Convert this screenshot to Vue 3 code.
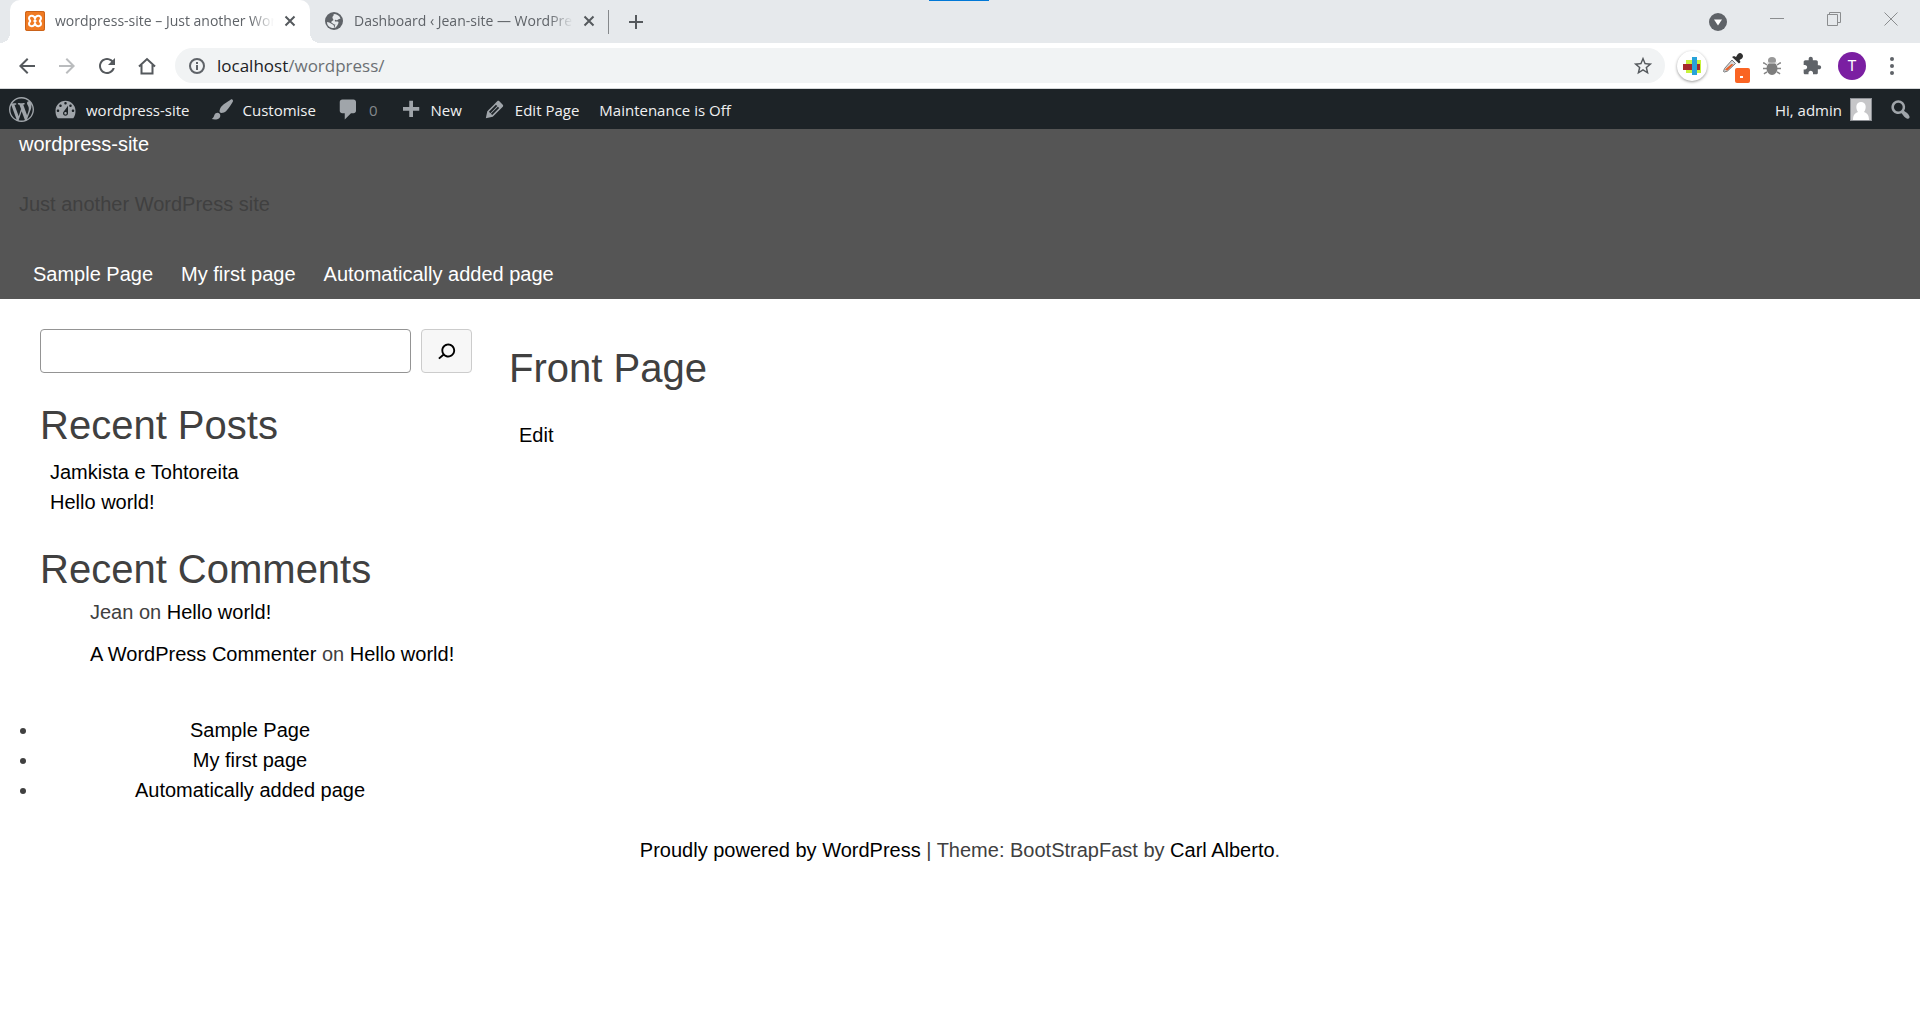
<script setup>
import { ref } from 'vue'

const address = ref('localhost/wordpress/')
const query = ref('')

const pages = ['Sample Page', 'My first page', 'Automatically added page']
const posts = ['Jamkista e Tohtoreita', 'Hello world!']

const adminItems = [
  {
    text: 'wordpress-site',
    icon: 'M3.76 17h12.48c1.34-1.63 1.76-3.74 1.76-6 0-4.42-3.58-8-8-8s-8 3.58-8 8c0 2.26.42 4.37 1.76 6zM10 4c.55 0 1 .45 1 1s-.45 1-1 1-1-.45-1-1 .45-1 1-1zM6 6c.55 0 1 .45 1 1s-.45 1-1 1-1-.45-1-1 .45-1 1-1zm8 0c.55 0 1 .45 1 1s-.45 1-1 1-1-.45-1-1 .45-1 1-1zm-5.37 5.55L12 7v6c0 1.1-.9 2-2 2s-2-.9-2-2c0-.57.24-1.08.63-1.45zM4 10c.55 0 1 .45 1 1s-.45 1-1 1-1-.45-1-1 .45-1 1-1zm12 0c.55 0 1 .45 1 1s-.45 1-1 1-1-.45-1-1 .45-1 1-1zm-5 3c0-.55-.45-1-1-1s-1 .45-1 1 .45 1 1 1 1-.45 1-1z',
  },
  {
    text: 'Customise',
    icon: 'M18.33 3.57s.27-.8-.31-1.36c-.53-.52-1.22-.24-1.22-.24-.61.3-5.76 3.47-7.67 5.57-.86.96-2.06 3.79-1.09 4.82.92.98 3.96-.17 4.79-1 2.06-2.06 5.21-7.17 5.5-7.79zM1.4 17.65c2.37-1.56 1.46-3.41 3.23-4.64.93-.65 2.22-.62 3.08.29.63.67.8 2.57-.16 3.46-1.57 1.45-4 1.55-6.15.89z',
  },
  {
    text: '0',
    dim: true,
    icon: 'M5 2h9c1.1 0 2 .9 2 2v7c0 1.1-.9 2-2 2h-2l-5 5v-5H5c-1.1 0-2-.9-2-2V4c0-1.1.9-2 2-2z',
  },
  { text: 'New', icon: 'M17 8v3h-5v5H9v-5H4V8h5V3h3v5h5z' },
  {
    text: 'Edit Page',
    icon: 'M13.89 3.39l2.71 2.72c.46.46.42 1.24.03 1.64l-8.01 8.02-5.56 1.16 1.16-5.58s7.6-7.63 7.99-8.03c.39-.39 1.22-.39 1.68.07zm-2.73 2.79l-5.59 5.61 1.11 1.11 5.54-5.65zm-2.97 8.23l5.58-5.6-1.07-1.08-5.59 5.6z',
  },
  { text: 'Maintenance is Off' },
]
</script>

<template>
  <div class="browser">
    <div class="tabstrip">
      <div class="tab active">
        <svg class="favicon" viewBox="0 0 20 20" aria-hidden="true">
          <rect width="20" height="20" rx="2" fill="#f07a22" />
          <rect x=".5" y=".5" width="19" height="19" rx="2" fill="none" stroke="#c9621a" />
          <path d="M10 7.500C9 4 4 4 4 7.200c0 1.500 1.200 2 1.200 2.800S4 11.300 4 12.800C4 16 9 16 10 12.500C11 16 16 16 16 12.800c0-1.500-1.200-2-1.200-2.800S16 8.700 16 7.200C16 4 11 4 10 7.500zM8.500 10h3" fill="none" stroke="#fff" stroke-width="2" />
        </svg>
        <span class="tab-title">wordpress-site – Just another WordPress site</span>
        <button class="plain" aria-label="Close tab">
          <svg width="12" height="12" viewBox="0 0 12 12"><path d="M1.500 1.500l9 9M10.500 1.500l-9 9" stroke="#55595d" stroke-width="2" /></svg>
        </button>
      </div>
      <div class="tab">
        <svg class="favicon" viewBox="0 0 20 20" aria-hidden="true">
          <circle cx="10" cy="10" r="9" fill="#5f6368" />
          <path d="M9.500 3C13 3 15.500 4.500 16.500 7.500L14 8.500c-.5.800-1 1-2 .5s-1.500.5-1 1.500h2.500c1.500 0 1 1.500.5 2.500s-1.500 3-3 4c-1-.5-1-2-1.500-3L7 12.500c-1-1-2.500-1-4-1.500 0 3.500 2.500 6 6.500 6l1.500-1c-.5-1-.2-1.500.5-2.500-1.500.5-2-1-3.500-1.500s-.5-2 1-2.500S8 7.500 8.500 6s2-1.500 1-3z" fill="#e6e9ec" />
        </svg>
        <span class="tab-title">Dashboard ‹ Jean-site — WordPress</span>
        <button class="plain" aria-label="Close tab">
          <svg width="12" height="12" viewBox="0 0 12 12"><path d="M1.500 1.500l9 9M10.500 1.500l-9 9" stroke="#55595d" stroke-width="2" /></svg>
        </button>
      </div>
      <span class="divider"></span>
      <button class="plain" aria-label="New tab">
        <svg width="16" height="16" viewBox="0 0 16 16"><path d="M8 1v14M1 8h14" stroke="#55595d" stroke-width="2" /></svg>
      </button>
      <div class="window-buttons">
        <button class="plain" aria-label="Search tabs">
          <svg width="18" height="18" viewBox="0 0 18 18" class="low"><circle cx="9" cy="9" r="9" fill="#5f6368" /><path d="M5 6.500h8L9 12.500z" fill="#fff" /></svg>
        </button>
        <button class="plain" aria-label="Minimise">
          <svg width="14" height="14" viewBox="0 0 14 14"><path d="M0 6.500h14" stroke="#8b8d8f" /></svg>
        </button>
        <button class="plain" aria-label="Restore">
          <svg width="14" height="14" viewBox="0 0 14 14"><path d="M.5 2.500h10v11H.5zM2.500 2.500v-2h11v10h-3" fill="none" stroke="#8b8d8f" /></svg>
        </button>
        <button class="plain" aria-label="Close">
          <svg width="14" height="14" viewBox="0 0 14 14"><path d="M.5.5l13 13M13.500.5l-13 13" stroke="#8b8d8f" /></svg>
        </button>
      </div>
      <span class="progress"></span>
    </div>

    <div class="toolbar">
      <button class="plain" aria-label="Back">
        <svg width="24" height="24" viewBox="0 0 24 24" fill="#55595d"><path d="M20 11H7.830l5.590-5.590L12 4l-8 8 8 8 1.410-1.410L7.830 13H20v-2z" /></svg>
      </button>
      <button class="plain" aria-label="Forward">
        <svg width="24" height="24" viewBox="0 0 24 24" fill="#babcbe"><path d="M12 4l-1.410 1.410L16.170 11H4v2h12.170l-5.580 5.590L12 20l8-8z" /></svg>
      </button>
      <button class="plain" aria-label="Reload">
        <svg width="24" height="24" viewBox="0 0 24 24" fill="#55595d"><path d="M17.650 6.350C16.200 4.900 14.210 4 12 4c-4.420 0-7.990 3.580-7.990 8s3.570 8 7.990 8c3.730 0 6.840-2.550 7.730-6h-2.080c-.82 2.330-3.040 4-5.650 4-3.310 0-6-2.690-6-6s2.690-6 6-6c1.660 0 3.140.69 4.220 1.780L13 11h7V4l-2.350 2.350z" /></svg>
      </button>
      <button class="plain" aria-label="Home">
        <svg width="24" height="24" viewBox="0 0 24 24"><path d="M4 12.500L12 5l8 7.500M6.500 11v8.500h11V11" fill="none" stroke="#55595d" stroke-width="2" /></svg>
      </button>
      <div class="omnibox">
        <svg width="16" height="16" viewBox="0 0 16 16" aria-hidden="true"><circle cx="8" cy="8" r="7" fill="none" stroke="#5f6368" stroke-width="2" /><path d="M7 7h2v5H7zM7 4h2v2H7z" fill="#5f6368" /></svg>
        <div class="address">
          <input v-model="address" aria-label="Address" />
          <span class="address-text" aria-hidden="true"><b>localhost</b>/wordpress/</span>
        </div>
        <button class="plain" aria-label="Bookmark this page">
          <svg width="22" height="22" viewBox="0 0 24 24" fill="#55595d"><path d="M22 9.240l-7.190-.62L12 2 9.190 8.630 2 9.240l5.460 4.730L5.820 21 12 17.270 18.180 21l-1.630-7.030L22 9.240zM12 15.400l-3.760 2.270 1-4.280-3.320-2.880 4.380-.38L12 6.100l1.710 4.040 4.380.38-3.320 2.880 1 4.280L12 15.400z" /></svg>
        </button>
      </div>
      <div class="extensions">
        <button class="plain" aria-label="Colour blocks extension">
          <span class="disc">
            <svg width="20" height="20" viewBox="0 0 20 20"><path d="M4 4h15v13H4z" fill="#c8f23c" /><path d="M1 8h17v6H1z" fill="#a52a2a" /><path d="M10 1h5v18h-5z" fill="#27a3d9" /></svg>
          </span>
        </button>
        <button class="plain" aria-label="Colour picker extension">
          <svg width="36" height="35" viewBox="-8 -5 36 35">
            <path d="M1.500 18.500l1-3L10 7l3.500 3.500-8 7.500-3 1z" fill="#d5d8da" stroke="#77797b" />
            <path d="M3 17l1-1.500 5.500-4.500 2 .5-6 6z" fill="#e8632b" />
            <path d="M10 4l2-1 2 1 1.500-2.500q2.500-2.500 4.500-.5t0 4.500L17.500 7l1 2-1.500 1.500z" fill="#303030" />
            <rect x="13" y="15" width="15" height="15" rx="2" fill="#fa6423" /><path d="M18 23h3v2h-3z" fill="#fff" />
          </svg>
        </button>
        <button class="plain" aria-label="Bug extension">
          <svg width="18" height="20" viewBox="0 0 18 20">
            <path d="M0 7h1l3 2M0 12.500h4M1 18l1-1 2-1M18 7h-1l-3 2M18 12.500h-4M17 18l-1-1-2-1" stroke="#858585" stroke-width="1.500" fill="none" />
            <ellipse cx="9" cy="4.500" rx="4" ry="3.500" fill="#999" /><ellipse cx="9" cy="12.500" rx="5.500" ry="6.500" fill="#7d7d7d" /><path d="M4 7h10" stroke="#ddd" />
          </svg>
        </button>
        <button class="plain" aria-label="Extensions">
          <svg width="20" height="20" viewBox="0 0 24 24" fill="#5f6368"><path d="M20.500 11H19V7c0-1.100-.9-2-2-2h-4V3.500C13 2.120 11.880 1 10.500 1S8 2.120 8 3.500V5H4c-1.100 0-1.990.9-1.990 2v3.800H3.500c1.490 0 2.700 1.210 2.700 2.700s-1.210 2.700-2.700 2.700H2V20c0 1.100.9 2 2 2h3.800v-1.500c0-1.490 1.210-2.700 2.700-2.700 1.490 0 2.700 1.210 2.700 2.700V22H17c1.100 0 2-.9 2-2v-4h1.500c1.380 0 2.500-1.120 2.500-2.500S21.880 11 20.500 11z" /></svg>
        </button>
        <button class="plain" aria-label="Profile"><span class="avatar">T</span></button>
        <button class="plain" aria-label="Menu">
          <svg width="4" height="18" viewBox="0 0 4 18" fill="#5f6368"><circle cx="2" cy="2" r="2" /><circle cx="2" cy="9" r="2" /><circle cx="2" cy="16" r="2" /></svg>
        </button>
      </div>
    </div>
  </div>

  <nav class="adminbar" aria-label="Admin">
    <a href="#" aria-label="About WordPress">
      <svg class="dash" viewBox="0 0 20 20"><path d="M20 10c0-5.510-4.490-10-10-10C4.480 0 0 4.490 0 10c0 5.520 4.480 10 10 10 5.510 0 10-4.480 10-10zM7.780 15.370L4.370 6.220c.55-.02 1.170-.08 1.170-.08.5-.06.44-1.130-.06-1.110 0 0-1.450.11-2.370.11-.18 0-.37 0-.58-.01C4.120 2.690 6.870 1.110 10 1.110c2.330 0 4.450.87 6.050 2.340-.68-.11-1.650.39-1.650 1.580 0 .74.45 1.360.9 2.100.35.61.55 1.360.55 2.460 0 1.490-1.400 5-1.400 5l-3.030-8.370c.54-.02.82-.17.82-.17.5-.05.44-1.250-.06-1.220 0 0-1.440.12-2.380.12-.87 0-2.330-.12-2.330-.12-.5-.03-.56 1.200-.06 1.220l.92.08 1.260 3.410zM17.410 10c.24-.64.74-1.870.43-4.250.7 1.290 1.050 2.710 1.050 4.250 0 3.290-1.730 6.240-4.400 7.780.97-2.590 1.940-5.200 2.920-7.780zM6.100 18.090C3.120 16.650 1.110 13.530 1.110 10c0-1.300.23-2.480.72-3.590C3.250 10.300 4.670 14.200 6.100 18.090zm4.030-6.630l2.580 6.980c-.86.29-1.760.45-2.710.45-.79 0-1.570-.11-2.290-.33.81-2.380 1.620-4.740 2.420-7.100z" /></svg>
    </a>
    <div class="admin-items">
      <a v-for="item in adminItems" :key="item.text" href="#" :class="{ dim: item.dim }">
        <svg v-if="item.icon" class="dash" viewBox="0 0 20 20" aria-hidden="true"><path :d="item.icon" /></svg>
        <span>{{ item.text }}</span>
      </a>
    </div>
    <div class="admin-account">
      <a href="#">
        <span>Hi, admin</span>
        <svg width="22" height="23" viewBox="0 0 22 23" aria-hidden="true"><path d="M0 0h22v23H0z" fill="#8c8f94" /><path d="M1 1h20v21H1z" fill="#c6c6c8" /><path d="M11 4c5 0 6 6 3 10 3 1 5 3 5 8H3c0-5 2-7 5-8-3-4-2-10 3-10z" fill="#fff" /></svg>
      </a>
      <a href="#" aria-label="Search">
        <svg class="dash" viewBox="0 0 20 20"><path d="M12.140 4.180c1.870 1.870 2.110 4.750.72 6.890.12.1.22.21.36.31.2.16.47.36.81.59.34.24.56.39.66.47.42.31.73.57.94.78.32.32.6.65.84 1 .25.35.44.69.59 1.040.14.35.21.68.18 1-.02.32-.14.59-.36.81s-.49.34-.81.36c-.31.02-.65-.04-.99-.19-.35-.14-.7-.34-1.040-.59-.35-.24-.68-.52-1-.84-.21-.21-.47-.52-.77-.93-.1-.13-.25-.35-.47-.66-.22-.32-.4-.57-.56-.78-.16-.2-.29-.35-.44-.5-2.070 1.090-4.690.76-6.440-.98-2.140-2.150-2.140-5.640 0-7.780 2.150-2.150 5.630-2.150 7.780 0zm-1.410 6.360c1.360-1.370 1.360-3.580 0-4.950-1.370-1.370-3.590-1.370-4.950 0-1.370 1.370-1.370 3.580 0 4.950 1.360 1.370 3.580 1.370 4.950 0z" /></svg>
      </a>
    </div>
  </nav>

  <header class="site-header">
    <a href="#">wordpress-site</a>
    <p>Just another WordPress site</p>
    <nav>
      <a v-for="page in pages" :key="page" href="#">{{ page }}</a>
    </nav>
  </header>

  <div class="columns">
    <aside>
      <form class="search" @submit.prevent>
        <input v-model="query" type="search" aria-label="Search" />
        <button aria-label="Search">
          <svg width="30" height="30" viewBox="0 0 24 24"><path d="M13 6C10 6 7.500 8.500 7.500 11.500c0 1.100.3 2.100.9 3l-3.400 3 1 1.100 3.400-2.900c1 .9 2.200 1.400 3.600 1.400 3 0 5.500-2.500 5.500-5.500C18.500 8.500 16 6 13 6zm0 9.500c-2.200 0-4-1.800-4-4s1.800-4 4-4 4 1.800 4 4-1.800 4-4 4z" /></svg>
        </button>
      </form>
      <section>
        <h2>Recent Posts</h2>
        <ul class="posts">
          <li v-for="post in posts" :key="post"><a href="#">{{ post }}</a></li>
        </ul>
      </section>
      <section>
        <h2>Recent Comments</h2>
        <ol class="comments">
          <li>Jean on <a href="#">Hello world!</a></li>
          <li><a href="#">A WordPress Commenter</a> on <a href="#">Hello world!</a></li>
        </ol>
      </section>
    </aside>
    <main>
      <h1>Front Page</h1>
      <a href="#">Edit</a>
    </main>
  </div>

  <footer>
    <ul>
      <li v-for="page in pages" :key="page"><a href="#">{{ page }}</a></li>
    </ul>
    <p><a href="#">Proudly powered by WordPress</a> | Theme: BootStrapFast by <a href="#">Carl Alberto</a>.</p>
  </footer>
</template>

<style>
body {
  margin: 0;
  background: #fff;
  color: #404040;
  font: 20px/30px "Liberation Sans", Arial, sans-serif;
}
</style>

<style scoped>
* {
  box-sizing: border-box;
}
a {
  color: #000;
  text-decoration: none;
}
svg {
  display: block;
  flex: none;
}
h1,
h2 {
  margin: 0;
  font-size: 40px;
  line-height: 48px;
  font-weight: 400;
}
p,
ul,
ol {
  margin: 0;
  padding: 0;
}
.plain {
  display: flex;
  align-items: center;
  justify-content: center;
  padding: 0;
  border: 0;
  background: none;
}

.browser {
  font-family: "Open Sans", "Segoe UI", sans-serif;
  border-bottom: 1px solid #d5d7d9;
}
.tabstrip {
  position: relative;
  display: flex;
  align-items: center;
  height: 43px;
  padding-left: 10px;
  background: #e6e9ec;
}
.tab {
  display: flex;
  align-items: center;
  width: 300px;
  height: 43px;
  padding: 0 15px 2px 14px;
  color: #5f6368;
  font-size: 14px;
}
.tab.active {
  position: relative;
  padding: 0 14px 2px 15px;
  border-radius: 10px 10px 0 0;
  background: #fff;
}
.tab.active::before,
.tab.active::after {
  content: "";
  position: absolute;
  bottom: 0;
  width: 10px;
  height: 10px;
}
.tab.active::before {
  right: 100%;
  background: radial-gradient(circle at 0 0, #e6e9ec 10px, #fff 10px);
}
.tab.active::after {
  left: 100%;
  background: radial-gradient(circle at 100% 0, #e6e9ec 10px, #fff 10px);
}
.favicon {
  width: 20px;
  height: 20px;
}
.tab-title {
  flex: 1;
  margin: 0 10px;
  overflow: hidden;
  white-space: nowrap;
  mask-image: linear-gradient(to right, #000 calc(100% - 24px), transparent);
}
.divider {
  width: 1px;
  height: 24px;
  margin: 0 19px 0 -2px;
  background: #85888b;
}
.window-buttons {
  display: flex;
  align-items: center;
  gap: 43px;
  margin-left: auto;
  padding: 0 22px 6px 0;
}
.window-buttons .low {
  margin-top: 6px;
}
.progress {
  position: absolute;
  top: 0;
  left: 50%;
  width: 60px;
  height: 1px;
  margin-left: -31px;
  background: #0078d7;
}
.toolbar {
  display: flex;
  align-items: center;
  gap: 16px;
  height: 45px;
  padding: 0 8px 0 15px;
}
.omnibox {
  display: flex;
  flex: 1;
  align-items: center;
  height: 35px;
  padding: 0 11px 0 14px;
  border-radius: 18px;
  background: #f1f3f4;
}
.address {
  display: grid;
  flex: 1;
  margin-left: 12px;
  font-size: 17px;
}
.address input,
.address-text {
  grid-area: 1 / 1;
}
.address input {
  padding: 0;
  border: 0;
  outline: 0;
  background: none;
  color: transparent;
  font: inherit;
}
.address-text {
  color: #6b6f73;
  pointer-events: none;
}
.address-text b {
  color: #202124;
  font-weight: 400;
}
.extensions {
  display: grid;
  grid-template-columns: repeat(6, 40px);
  align-items: center;
  margin-left: -9px;
}
.disc {
  display: grid;
  place-items: center;
  width: 30px;
  height: 30px;
  border-radius: 50%;
  box-shadow: 0 1px 3px #999;
}
.avatar {
  width: 28px;
  height: 28px;
  border-radius: 50%;
  background: #7b1fa2;
  color: #fff;
  font: 15px/28px "Roboto", sans-serif;
}

.adminbar {
  display: flex;
  align-items: center;
  gap: 19px;
  height: 40px;
  padding: 0 7px 0 9px;
  background: #1d2327;
  font: 15px/40px "Open Sans", "Segoe UI", sans-serif;
}
.admin-items,
.admin-account {
  display: flex;
  align-items: center;
  gap: 20px;
}
.admin-account {
  gap: 16px;
  margin-left: auto;
}
.adminbar a {
  display: flex;
  align-items: center;
  gap: 8px;
  color: #f0f0f1;
}
.adminbar a.dim {
  color: #84888c;
}
.adminbar span {
  padding-top: 1px;
}
.dash {
  width: 25px;
  height: 25px;
  fill: #a0a5aa;
}

.site-header {
  padding: 0 19px 10px;
  background: #555;
}
.site-header a {
  color: #fff;
}
.site-header p {
  margin: 30px 0 40px;
}
.site-header nav {
  display: flex;
  gap: 28px;
  padding-left: 14px;
}

.columns {
  display: flex;
  padding: 30px 0 46px;
}
aside {
  width: 25%;
  padding: 0 8px 0 40px;
}
.search {
  display: flex;
  gap: 10px;
  margin-bottom: 28px;
}
.search input {
  flex: 1;
  min-width: 0;
  height: 44px;
  padding: 0 10px;
  border: 1px solid #949494;
  border-radius: 4px;
  font: inherit;
}
.search button {
  display: grid;
  place-items: center;
  width: 51px;
  padding: 0;
  border: 1px solid #ccc;
  border-radius: 4px;
  background: #f7f7f7;
}
section + section {
  margin-top: 28px;
}
.posts {
  margin-top: 8px;
  padding-left: 10px;
  list-style: none;
}
.comments {
  margin-top: 4px;
  padding-left: 50px;
  list-style: none;
}
.comments li + li {
  margin-top: 12px;
}
main {
  flex: 1;
  padding: 15px 29px;
}
main h1 {
  margin-bottom: 28px;
}
main a {
  margin-left: 10px;
}

footer {
  text-align: center;
}
footer ul {
  width: 25%;
  padding: 0 19px 0 39px;
}
footer p {
  margin-top: 30px;
}
</style>
